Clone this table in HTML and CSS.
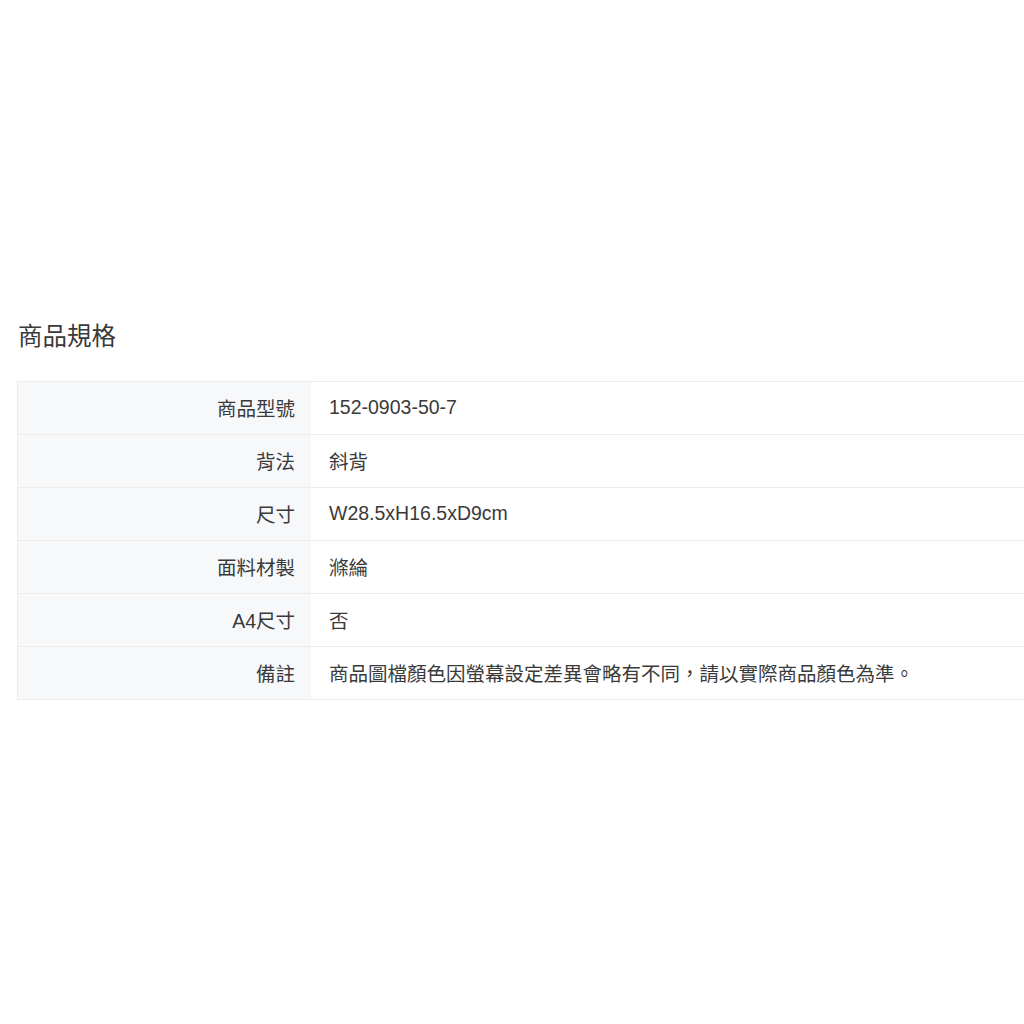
FILE: index.html
```html
<!DOCTYPE html>
<html lang="zh-Hant">

<head>
  <meta charset="UTF-8">
  <meta name="viewport" content="width=device-width, initial-scale=1.0">
  <title>商品規格</title>
  <link rel="stylesheet" href="styles.css">
</head>

<body>
  <div class="spec-box">
    <h2 class="spec-title">商品規格</h2>
    <table class="spec-table">
      <tr>
        <th>商品型號</th>
        <td>152-0903-50-7</td>
      </tr>
      <tr>
        <th>背法</th>
        <td>斜背</td>
      </tr>
      <tr>
        <th>尺寸</th>
        <td>W28.5xH16.5xD9cm</td>
      </tr>
      <tr>
        <th>面料材製</th>
        <td>滌綸</td>
      </tr>
      <tr>
        <th>A4尺寸</th>
        <td>否</td>
      </tr>
      <tr>
        <th>備註</th>
        <td>商品圖檔顏色因螢幕設定差異會略有不同，請以實際商品顏色為準。</td>
      </tr>
    </table>
  </div>
</body>

</html>
```

FILE: styles.css
```css
/* Pagina basis */
body {
  margin: 0;
  background-color: white;
  color: #3a3a3a;
  font-family: "Liberation Sans", Arial, "Noto Sans CJK TC", sans-serif;
  overflow: hidden;
}

/* Blok met de specificaties */
.spec-box {
  padding: 319px 0 0 17px;
}

.spec-title {
  margin: 0 0 26px 1px;
  font-size: 24.5px;
  font-weight: normal;
  line-height: 36px;
  color: #3a3a3a;
}

/* Tabel loopt rechts buiten beeld door */
.spec-table {
  width: 1100px;
  border-collapse: collapse;
  border: 1px solid #ececec;
  font-size: 19.5px;
}

.spec-table th,
.spec-table td {
  height: 51px;
  padding: 0 0 1px 0;
  border-top: 1px solid #ececec;
  border-bottom: 1px solid #ececec;
  font-weight: normal;
  vertical-align: middle;
}

.spec-table th {
  width: 277px;
  padding-right: 16px;
  text-align: right;
  background-color: #f7f8fa;
}

.spec-table td {
  padding-left: 18px;
  text-align: left;
}
```
